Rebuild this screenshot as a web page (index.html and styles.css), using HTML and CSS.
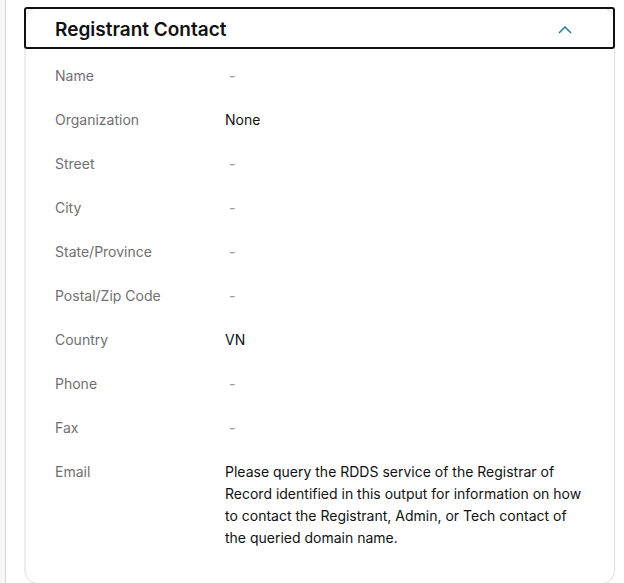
FILE: index.html
```html
<!DOCTYPE html>
<html lang="en">
<head>
<meta charset="utf-8">
<meta name="viewport" content="width=device-width, initial-scale=1">
<title>Registrant Contact</title>
<link rel="stylesheet" href="styles.css">
</head>
<body>
<main class="page">
  <section class="card">
    <h2 class="card-heading">
      <button class="toggle" type="button" aria-expanded="true" aria-controls="contact">
        <span>Registrant Contact</span>
        <svg class="chevron" viewBox="0 0 14 8" aria-hidden="true"><path d="M1 7 7 1l6 6"/></svg>
      </button>
    </h2>
    <dl class="details" id="contact">
      <dt>Name</dt><dd class="empty">-</dd>
      <dt>Organization</dt><dd>None</dd>
      <dt>Street</dt><dd class="empty">-</dd>
      <dt>City</dt><dd class="empty">-</dd>
      <dt>State/Province</dt><dd class="empty">-</dd>
      <dt>Postal/Zip Code</dt><dd class="empty">-</dd>
      <dt>Country</dt><dd>VN</dd>
      <dt>Phone</dt><dd class="empty">-</dd>
      <dt>Fax</dt><dd class="empty">-</dd>
      <dt>Email</dt><dd>Please query the RDDS service of the Registrar of Record identified in this output for information on how to contact the Registrant, Admin, or Tech contact of the queried domain name.</dd>
    </dl>
  </section>
</main>
</body>
</html>
```
FILE: styles.css
```css
* {
  box-sizing: border-box;
}

body {
  margin: 0;
  height: 100vh;
  overflow: hidden;
  background: #f5f7f8;
  color: #111;
  font: 14px/22px Inter, "Liberation Sans", sans-serif;
}

.page {
  min-height: 100vh;
  margin-left: 5px;
  padding: 7px 9px 0 18px;
  border-left: 1px solid #d6d6d6;
  background: #fff;
}

.card {
  border: 1px solid #dce3e9;
  border-left: 2px solid #e9eef2;
  border-radius: 14px;
}

.card-heading {
  margin: -1px -1px 0 -2px;
}

.toggle {
  display: flex;
  align-items: center;
  justify-content: space-between;
  width: 100%;
  height: 42px;
  padding: 3px 41px 0 29px;
  border: 2px solid #111;
  border-radius: 3px;
  background: transparent;
  color: #111;
  font: 600 19px/24px Inter, "Liberation Sans", sans-serif;
  text-align: left;
}

.chevron {
  width: 14px;
  height: 8px;
  fill: none;
  stroke: #1b838a;
  stroke-width: 1.5;
}

.details {
  display: grid;
  grid-template-columns: 170px 1fr;
  row-gap: 22px;
  margin: 0;
  padding: 16px 28px 34px 29px;
}

dt {
  color: #707070;
}

dd {
  margin: 0;
}

.empty {
  padding-left: 4px;
  color: #a0a0a0;
  font-weight: 500;
}
```
